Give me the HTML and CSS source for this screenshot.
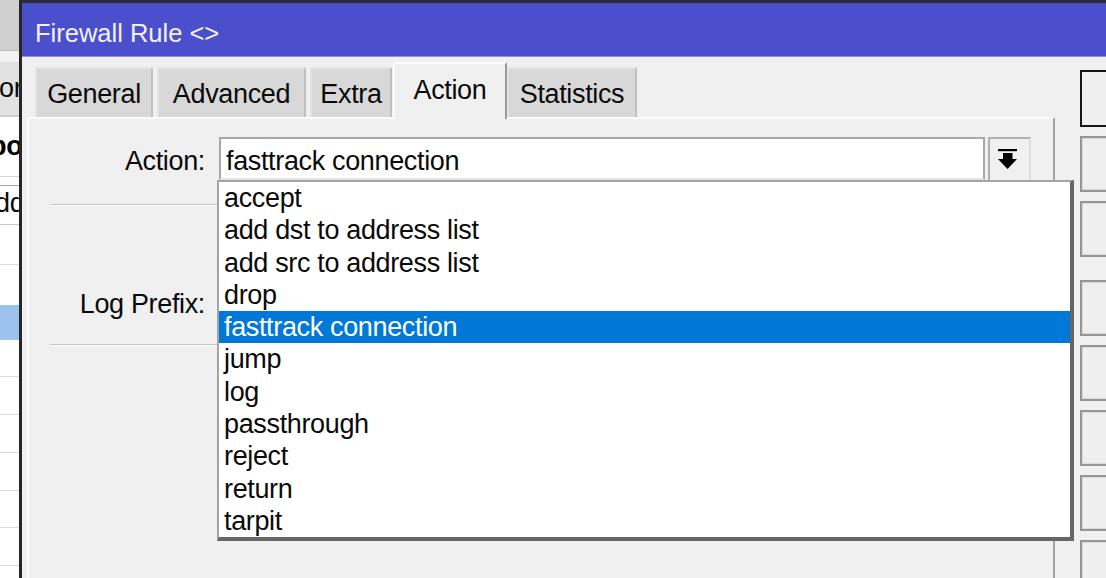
FILE: index.html
```html
<!DOCTYPE html>
<html>
<head>
<meta charset="utf-8">
<link rel="stylesheet" href="styles.css">
</head>
<body>
<div class="screen">
  <div class="bg-win">
    <div class="bg-top"></div>
    <div class="bg-gap"></div>
    <div class="bg-head"><span class="clip-or">or</span></div>
    <div class="bg-bold"><span class="clip-bo">bo</span></div>
    <div class="bg-space"></div>
    <div class="bg-field"><span class="clip-dd">dd</span></div>
    <div class="bg-row h40"></div>
    <div class="bg-row h40 nob"></div>
    <div class="bg-row sel h35"></div>
    <div class="bg-row h37"></div>
    <div class="bg-row h38"></div>
    <div class="bg-row h38"></div>
    <div class="bg-row h38"></div>
    <div class="bg-row h37"></div>
    <div class="bg-row h38"></div>
  </div>
  <div class="win">
    <div class="titlebar">Firewall Rule &lt;&gt;</div>
    <div class="win-body">
      <div class="main">
        <div class="tabs">
          <div class="tab w-general">General</div>
          <div class="tab w-advanced">Advanced</div>
          <div class="tab w-extra">Extra</div>
          <div class="tab tab-on w-action">Action</div>
          <div class="tab w-stats">Statistics</div>
        </div>
        <div class="page">
          <div class="row">
            <div class="label">Action:</div>
            <div class="input">fasttrack connection</div>
            <div class="dd-btn">
              <svg class="dd-icon" width="20" height="21" viewBox="0 0 20 21">
                <rect x="0" y="0" width="19" height="2.2" fill="#000"/>
                <rect x="5" y="4" width="9.5" height="6.5" fill="#000"/>
                <polygon points="0,10 19,10 9.5,20" fill="#000"/>
              </svg>
            </div>
          </div>
          <div class="sep"></div>
          <div class="row row-log">
            <div class="label">Log Prefix:</div>
            <div class="input"></div>
          </div>
          <div class="sep sep-2"></div>
        </div>
      </div>
      <div class="buttons">
        <div class="btn btn-default"></div>
        <div class="btn"></div>
        <div class="btn"></div>
        <div class="btn btn-gap"></div>
        <div class="btn"></div>
        <div class="btn"></div>
        <div class="btn"></div>
        <div class="btn"></div>
      </div>
    </div>
  </div>
  <ul class="dropdown">
    <li>accept</li>
    <li>add dst to address list</li>
    <li>add src to address list</li>
    <li>drop</li>
    <li class="sel">fasttrack connection</li>
    <li>jump</li>
    <li>log</li>
    <li>passthrough</li>
    <li>reject</li>
    <li>return</li>
    <li>tarpit</li>
  </ul>
</div>
</body>
</html>
```
FILE: styles.css
```css
* { box-sizing: border-box; margin: 0; padding: 0; }
html, body { width: 1106px; height: 578px; overflow: hidden; }
body {
  background: #f0f0f0;
  font-family: "Liberation Sans", Arial, sans-serif;
  font-size: 27px;
  letter-spacing: -0.35px;
  color: #0a0a0a;
}
.screen {
  position: relative;
  display: flex;
  width: 1106px;
  height: 578px;
  overflow: hidden;
}

/* background window strip on the left */
.bg-win {
  width: 19px;
  flex: none;
  background: #fff;
  display: flex;
  flex-direction: column;
  overflow: hidden;
  white-space: nowrap;
}
.bg-top { height: 50px; flex: none; background: #d0d0d0; }
.bg-gap { height: 12px; flex: none; background: #f2f2f2; border-top: 1px solid #bcbcbc; }
.bg-head {
  height: 55px; flex: none;
  background: #e2e2e2;
  border-bottom: 2px solid #cfcfcf;
  line-height: 53px;
}
.clip-or { display: inline-block; margin-left: -1px; }
.bg-bold {
  height: 60px; flex: none;
  border-bottom: 1px solid #d6d6d6;
  font-weight: bold;
  line-height: 59px;
  color: #000;
}
.clip-bo { display: inline-block; margin-left: -10px; }
.bg-space { height: 8px; flex: none; }
.bg-field {
  height: 40px; flex: none;
  border-top: 1px solid #a8a8a8;
  border-bottom: 1px solid #c8c8c8;
  line-height: 34px;
}
.clip-dd { display: inline-block; margin-left: -5px; }
.bg-row { flex: none; border-bottom: 1px solid #dcdcdc; }
.bg-row.nob { border-bottom: none; }
.bg-row.sel { background: #9dc2ee; border-bottom: none; }
.h35 { height: 35px; }
.h37 { height: 37px; }
.h38 { height: 38px; }
.h40 { height: 40px; }

/* main window */
.win {
  flex: 1;
  min-width: 0;
  display: flex;
  flex-direction: column;
  border-left: 3px solid #262626;
  border-top: 3px solid #2a2a36;
}
.titlebar {
  flex: none;
  height: 54px;
  background: #4b4fcc;
  color: #f2f2ff;
  font-size: 25.5px;
  letter-spacing: 0;
  padding: 6px 0 0 13px;
  line-height: 48px;
  border-bottom: 1px solid #8e91df;
  white-space: nowrap;
}
.win-body {
  flex: 1;
  display: flex;
  padding: 5px 0 0 5px;
  min-height: 0;
}
.main {
  width: 1028px;
  flex: none;
  display: flex;
  flex-direction: column;
}
.tabs {
  flex: none;
  height: 55px;
  display: flex;
  align-items: flex-end;
  padding-left: 8px;
}
.tab {
  height: 50px;
  margin-right: 4px;
  background: #d8d8d8;
  border-top: 2px solid #e4e4e4;
  border-left: 2px solid #e4e4e4;
  border-right: 2px solid #c0c0c0;
  padding-top: 2px;
  line-height: 46px;
  text-align: center;
  white-space: nowrap;
}
.tab-on {
  position: relative;
  z-index: 1;
  height: 57px;
  margin-bottom: -2px;
  margin-right: 0;
  background: #f0f0f0;
  border-top: 2px solid #fbfbfb;
  border-left: 2px solid #fbfbfb;
  border-right: 2px solid #9c9c9c;
  line-height: 48px;
}
.w-general { width: 118px; }
.w-advanced { width: 149px; }
.w-extra { width: 82px; margin-right: 1px; }
.w-action { width: 114px; }
.w-stats { width: 130px; }

.page {
  flex: 1;
  background: #f0f0f0;
  border-top: 2px solid #fbfbfb;
  border-left: 2px solid #fbfbfb;
  border-right: 2px solid #a3a3a3;
  padding-top: 18px;
}
.row {
  display: flex;
  height: 43px;
}
.label {
  width: 176px;
  margin-right: 14px;
  text-align: right;
  padding-top: 5px;
  line-height: 38px;
  white-space: nowrap;
}
.input {
  width: 766px;
  height: 43px;
  background: #fff;
  border-top: 2px solid #a8a8a8;
  border-left: 2px solid #a8a8a8;
  border-right: 2px solid #a8a8a8;
  border-bottom: 2px solid #e2e2e2;
  padding: 3px 0 0 5px;
  line-height: 38px;
  white-space: nowrap;
}
.dd-btn {
  width: 43px;
  height: 43px;
  margin-left: 3px;
  background: #f0f0f0;
  border-top: 2px solid #b0b0b0;
  border-left: 2px solid #b0b0b0;
  border-right: 2px solid #dedede;
}
.dd-icon { display: block; margin: 10px 0 0 8px; }
.sep {
  height: 2px;
  margin: 24px 20px 0 21px;
  border-top: 1px solid #c6c6c6;
  border-bottom: 1px solid #fdfdfd;
}
.row-log { margin-top: 74px; }
.sep-2 { margin-top: 21px; }

.buttons {
  margin-left: 25px;
  padding-top: 8px;
  display: flex;
  flex-direction: column;
  gap: 9px;
}
.btn {
  width: 100px;
  height: 56px;
  flex: none;
  background: #efefef;
  border: 2px solid #969696;
  box-shadow: inset 0 0 0 1px #dadada;
}
.btn-default { height: 57px; border-color: #151515; box-shadow: none; }
.btn-gap { margin-top: 14px; }

/* open combo list */
.dropdown {
  position: absolute;
  left: 217px;
  top: 180px;
  width: 857px;
  height: 361px;
  overflow: hidden;
  background: #fff;
  list-style: none;
  border-top: 2px solid #a4a4a4;
  border-left: 2px solid #a4a4a4;
  border-right: 4px solid #666;
  border-bottom: 4px solid #666;
}
.dropdown li {
  height: 32.3px;
  line-height: 32.3px;
  padding-left: 5px;
  white-space: nowrap;
  color: #0a0a0a;
}
.dropdown li.sel {
  background: #0078d7;
  color: #fff;
}
```
